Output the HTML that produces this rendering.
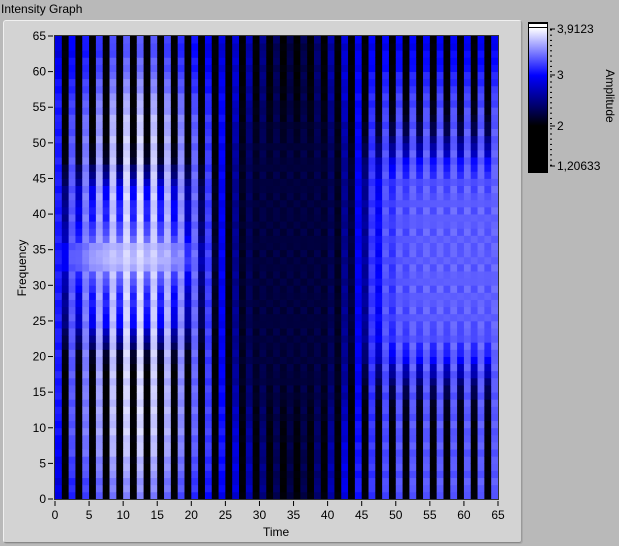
<!DOCTYPE html>
<html><head><style>
body{margin:0;width:619px;height:546px;background:#b9b9b9;position:relative;overflow:hidden;font-family:"Liberation Sans",Tahoma,sans-serif;font-size:12px;color:#000}
.t{position:absolute;white-space:nowrap;line-height:12px}
</style></head><body>
<div class="t" style="left:1px;top:3px">Intensity Graph</div>
<div style="position:absolute;left:3px;top:20px;width:517px;height:521px;background:#d3d3d3;border:1px solid #f0f0f0;border-right-color:#999;border-bottom-color:#888;border-radius:3px;box-shadow:1px 1px 0 #aaa"></div>
<svg id="g" width="619" height="546" style="position:absolute;left:0;top:0"></svg>
<div class="t" style="left:-8px;top:262px;transform:rotate(-90deg);width:60px;text-align:center">Frequency</div>
<div class="t" style="left:263px;top:526px">Time</div>
<div class="t" style="left:580px;top:90px;transform:rotate(90deg);width:60px;text-align:center">Amplitude</div>
<script>
(function(){
var s='';
function sig(z){return 1/(1+Math.exp(-z));}
function col(t){if(!(t>=0))t=0;t=Math.min(2,t);var r,g,b;
 if(t<1){r=0;g=0;b=Math.round(255*Math.pow(t,1.3));}else{var u=t-1;r=g=Math.round(255*u);b=255;}
 return 'rgb('+r+','+g+','+b+')';}
var X0=55,X1=498,Y0=36,Y1=499,cw=(X1-X0)/65,rh=(Y1-Y0)/65;
for(var i=0;i<65;i++){for(var j=0;j<65;j++){
 var x=i+0.5,y=j+0.5,v;
 var tp=1-0.3*sig((y-58)/2.5), bt=1-0.2*sig((4-y)/2);
 var band=sig((y-19)/1.5)*sig((48-y)/1.5);
 var bandS=sig((y-16)/2.5)*sig((51-y)/2.5);
 var bw=sig((y-12)/3)*sig((54-y)/3);
 var h=Math.exp(-Math.pow((x-34.5)/9,4))*bw;
 var left=(1.0+0.85*Math.exp(-Math.pow((x-12)/10,2)))*tp*bt;
 var lw=sig((26-x)/1);
 var midB=0.95-0.6*Math.exp(-Math.pow((x-35)/6,2));
 var rw=sig((x-45)/2);
 var right=(1.35+0.05*band)*(1-0.3*sig((y-59)/2));
 if(i%2==0){
  var A=left*lw+(midB*(1-rw)+right*rw)*(1-lw);
  v=A*(1-h)+0.35*h;
  if(x<1)v=Math.min(v,0.9+0.2*sig((y-8)/2));
 }else{
  var Ld=(1.15*sig((y-22)/1.5)*sig((46-y)/1.5)+0.6*Math.exp(-Math.pow((y-34)/3,2)))*Math.exp(-Math.pow((x-11)/11,4));
  var Rd=(1.35*band+0.9*(bandS-band))*sig((x-45.5)/1.8);
  v=Math.max(0.03,Ld,Rd,0.33*h);
 }
 v+=0.05*Math.sin(i*3.1+j*2.3);
 var px=X0+i*cw,py=Y1-(j+1)*rh;
 s+='<rect x="'+px.toFixed(2)+'" y="'+py.toFixed(2)+'" width="'+(cw+0.4).toFixed(2)+'" height="'+(rh+0.4).toFixed(2)+'" fill="'+col(v)+'"/>';
}}
s+='<rect x="54.5" y="35.5" width="444" height="464" fill="none" stroke="#333"/>';
for(var k=0;k<=13;k++){var val=k*5;var yy=Y1-val*(Y1-Y0)/65,xx=X0+val*(X1-X0)/65;
 s+='<line x1="48" x2="53" y1="'+yy+'" y2="'+yy+'" stroke="#000"/>';
 s+='<text x="46" y="'+(yy+4)+'" text-anchor="end" font-family="Liberation Sans,sans-serif" font-size="12">'+val+'</text>';
 s+='<line x1="'+xx+'" x2="'+xx+'" y1="501" y2="506" stroke="#000"/>';
 s+='<text x="'+xx+'" y="519" text-anchor="middle" font-family="Liberation Sans,sans-serif" font-size="12">'+val+'</text>';}
s+='<defs><linearGradient id="cb" x1="0" y1="0" x2="0" y2="1"><stop offset="0" stop-color="#fff"/><stop offset="0.33" stop-color="#00f"/><stop offset="0.55" stop-color="#000066"/><stop offset="0.68" stop-color="#000"/><stop offset="1" stop-color="#000"/></linearGradient></defs>';
s+='<rect x="528" y="22" width="20" height="151" fill="#000"/>';
s+='<rect x="529" y="24" width="18" height="3" fill="#fff"/>';
s+='<rect x="529" y="28" width="18" height="144" fill="url(#cb)"/>';
for(var q=30;q<=170;q+=5.2){s+='<line x1="550" x2="552" y1="'+q.toFixed(1)+'" y2="'+q.toFixed(1)+'" stroke="#000"/>';}
[[29,'3,9123'],[75,'3'],[126,'2'],[166,'1,20633']].forEach(function(a){
 s+='<line x1="550" x2="555" y1="'+a[0]+'" y2="'+a[0]+'" stroke="#000"/>';
 s+='<text x="557" y="'+(a[0]+4)+'" font-family="Liberation Sans,sans-serif" font-size="12">'+a[1]+'</text>';});
document.getElementById('g').innerHTML=s;
})();
</script>
</body></html>
